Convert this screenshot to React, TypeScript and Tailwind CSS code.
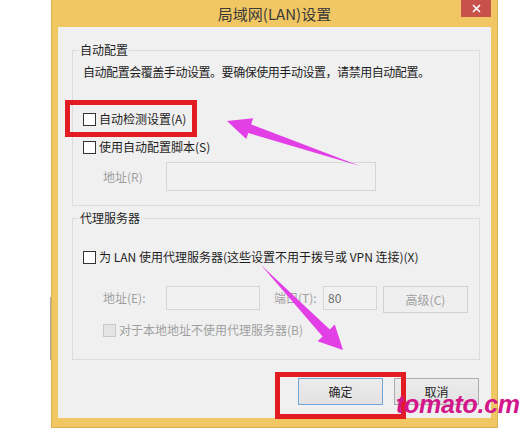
import React from "react";

function Box({ disabled = false }: { disabled?: boolean }) {
  return (
    <span
      className={
        disabled
          ? "inline-block w-[13px] h-[13px] border border-[#c8c8c8] bg-[#e4e4e4] shrink-0"
          : "inline-block w-[13px] h-[13px] border border-[#333333] bg-white shrink-0"
      }
    />
  );
}

function Group({
  label,
  className,
  children,
}: {
  label: string;
  className: string;
  children: React.ReactNode;
}) {
  return (
    <div className={"relative border border-[#dcdcdc] " + className}>
      <span className="absolute left-[6px] -top-[9px] px-[1px] bg-[#f0f0f0] leading-[16px]">
        {label}
      </span>
      {children}
    </div>
  );
}

export default function App() {
  return (
    <div className="relative w-[529px] h-[430px] bg-white overflow-hidden font-['Noto_Sans_CJK_SC',sans-serif] text-[12px] text-[#1e1e1e]">
      {/* window */}
      <div className="ml-[51px] w-[447px] h-[428px] bg-[#f0c762] border border-t-0 border-[#d9b152] flex flex-col">
        {/* title bar */}
        <div className="relative h-[27px] flex items-center justify-center">
          <span className="text-[15px] leading-[20px] text-[#3a3a3a]">局域网(LAN)设置</span>
          <div className="absolute right-[6px] top-0 w-[30px] h-[17px] bg-[#c9514c] flex items-center justify-center">
            <svg width="9" height="9" viewBox="0 0 9 9">
              <path d="M1 1 L8 8 M8 1 L1 8" stroke="#ffffff" strokeWidth="1.6" />
            </svg>
          </div>
        </div>
        {/* client area */}
        <div className="mx-[6px] h-[391px] bg-[#f0f0f0] flex flex-col">
          <Group label="自动配置" className="ml-[14px] mr-[11px] mt-[23px] h-[156px]">
            <div className="flex flex-col pl-[10px] pt-[13px]">
              <div className="leading-[16px] whitespace-nowrap tracking-[-0.45px]">
                自动配置会覆盖手动设置。要确保使用手动设置，请禁用自动配置。
              </div>
              <div className="mt-[31px] h-[16px] flex items-center gap-[3px] leading-[16px]">
                <Box />
                <span>自动检测设置(A)</span>
              </div>
              <div className="mt-[12px] h-[16px] flex items-center gap-[3px] leading-[16px]">
                <Box />
                <span>使用自动配置脚本(S)</span>
              </div>
              <div className="mt-[7px] pl-[20px] flex items-center">
                <span className="w-[63px] text-[#a0a0a0] leading-[16px]">地址(R)</span>
                <div className="w-[210px] h-[29px] border border-[#d6d6d6] bg-[#f1f1f1]" />
              </div>
            </div>
          </Group>

          <Group label="代理服务器" className="ml-[14px] mr-[11px] mt-[12px] h-[142px]">
            <div className="flex flex-col pl-[10px]">
              <div className="mt-[30px] h-[16px] flex items-center gap-[3px] leading-[16px] whitespace-nowrap">
                <Box />
                <span>为 LAN 使用代理服务器(这些设置不用于拨号或 VPN 连接)(X)</span>
              </div>
              <div className="mt-[21px] pl-[20px] flex items-start">
                <span className="w-[63px] h-[24px] flex items-center text-[#a0a0a0]">地址(E):</span>
                <div className="w-[94px] h-[24px] border border-[#d6d6d6] bg-[#f1f1f1]" />
                <span className="ml-[14px] w-[49px] h-[24px] flex items-center text-[#a0a0a0]">端口(T):</span>
                <div className="w-[54px] h-[24px] border border-[#d6d6d6] bg-[#f1f1f1] pl-[4px] flex items-center text-[#6d6d6d]">
                  80
                </div>
                <div className="ml-[6px] w-[85px] h-[27px] border border-[#d0d0d0] bg-[#efefef] flex items-center justify-center text-[#a0a0a0]">
                  高级(C)
                </div>
              </div>
              <div className="mt-[9px] pl-[20px] h-[16px] flex items-center gap-[3px] leading-[16px] text-[#a0a0a0]">
                <Box disabled />
                <span>对于本地地址不使用代理服务器(B)</span>
              </div>
            </div>
          </Group>

          <div className="mt-[18px] flex justify-end gap-[11px] pr-[12px]">
            <div className="w-[85px] h-[27px] border border-[#6fa7dc] bg-gradient-to-b from-[#ececec] to-[#e2e2e2] flex items-center justify-center">
              确定
            </div>
            <div className="w-[85px] h-[27px] border border-[#acacac] bg-gradient-to-b from-[#ececec] to-[#e2e2e2] flex items-center justify-center">
              取消
            </div>
          </div>
        </div>
      </div>

      {/* faint edge of window behind */}
      <div className="absolute left-[50px] top-[297px] w-[1px] h-[63px] bg-[#a8a8a8]" />

      {/* annotations */}
      <div className="absolute left-[65px] top-[100px] w-[132px] h-[37px] border-[5px] border-[#e31c24]" />
      <div className="absolute left-[275px] top-[372px] w-[131px] h-[47px] border-[5px] border-[#e31c24]" />

      <svg className="absolute left-0 top-0 pointer-events-none" width="529" height="430" viewBox="0 0 529 430">
        <polygon
          points="227,121 253.2,118.3 251.1,124.4 360,166 248.3,133 246.2,139.1"
          fill="#e23fe6"
        />
        <polygon
          points="343,350 317.6,341.3 322.6,336.4 261,265 329.8,329.4 334.8,324.5"
          fill="#e23fe6"
        />
      </svg>

      <div className="absolute left-[396px] top-[392px] text-[25px] leading-[25px] font-bold italic text-[#d4168b] font-['Liberation_Sans',sans-serif] tracking-[-0.3px]">
        tomato.cm
      </div>
    </div>
  );
}
